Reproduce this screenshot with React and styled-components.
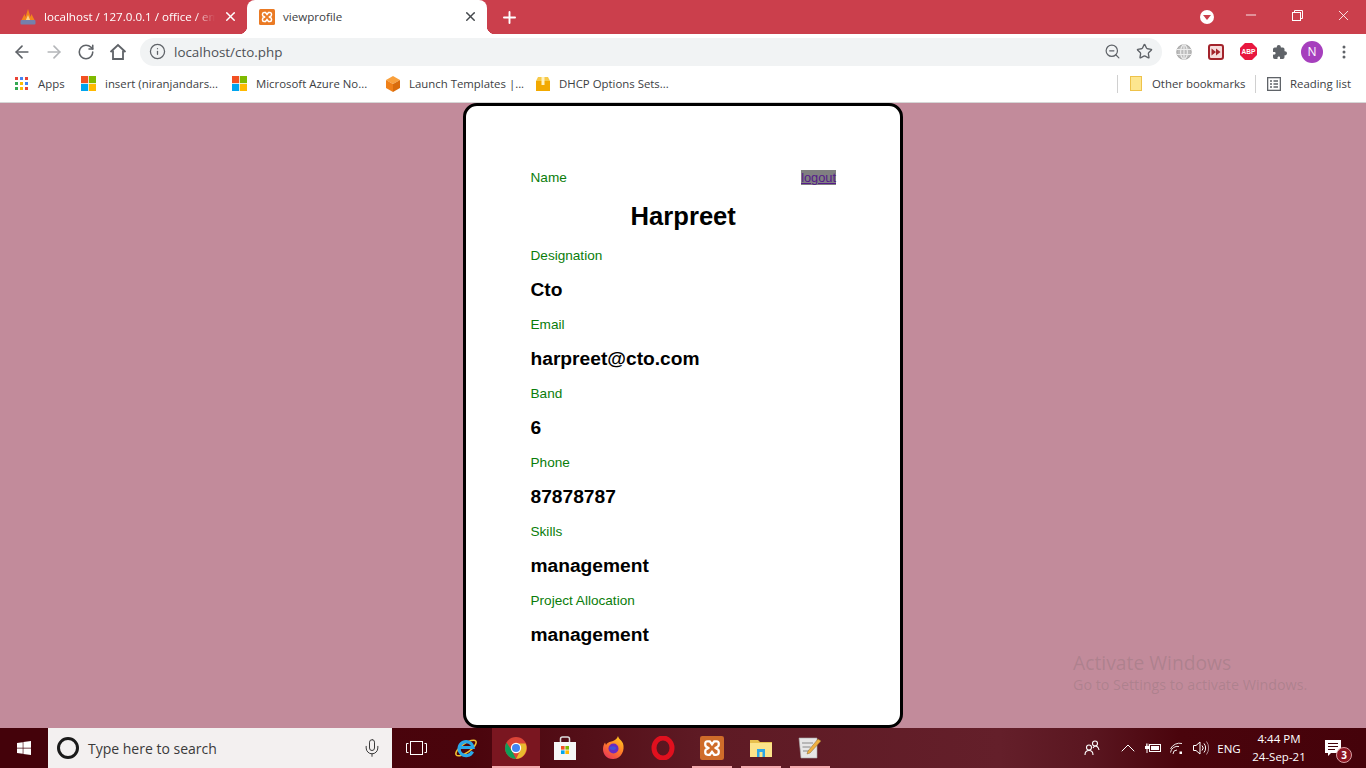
import React from "react";
import styled, { createGlobalStyle } from "styled-components";
import { ArrowLeft, ArrowRight, RotateCw, Info, ZoomOut, Star, X, Plus, Mic, Minus, ChevronUp } from "lucide-react";
import { IoExtensionPuzzle } from "react-icons/io5";
import { FaWindows } from "react-icons/fa";

const uiFont = `"Open Sans", "Noto Sans", sans-serif`;

const profile = [
  { label: "Designation", value: "Cto" },
  { label: "Email", value: "harpreet@cto.com" },
  { label: "Band", value: "6" },
  { label: "Phone", value: "87878787" },
  { label: "Skills", value: "management" },
  { label: "Project Allocation", value: "management" },
];

const GlobalStyle = createGlobalStyle`
  html, body {
    margin: 0;
    height: 768px;
    overflow: hidden;
    font-family: "Liberation Sans", Arial, sans-serif;
  }
  * { box-sizing: border-box; }
`;

const Screen = styled.div`
  width: 1366px;
  height: 768px;
  display: flex;
  flex-direction: column;
  position: relative;
  overflow: hidden;
`;

/* ---------- browser chrome ---------- */

const TabStrip = styled.div`
  height: 34px;
  flex: none;
  background: #cb3f4c;
  display: flex;
  align-items: stretch;
  padding-left: 8px;
  font-family: ${uiFont};
  font-size: 11.6px;
`;

const Tab = styled.div`
  width: ${(p) => (p.$active ? "240px" : "239px")};
  position: relative;
  display: flex;
  align-items: center;
  gap: 8px;
  padding: 0 9px 1px 12px;
  color: ${(p) => (p.$active ? "#3c4043" : "#fff")};
  background: ${(p) => (p.$active ? "#fff" : "transparent")};
  border-radius: 8px 8px 0 0;
  &::before, &::after {
    content: "";
    display: ${(p) => (p.$active ? "block" : "none")};
    position: absolute;
    bottom: 0;
    width: 8px;
    height: 8px;
  }
  &::before {
    left: -8px;
    background: radial-gradient(circle at 0 0, #cb3f4c 8px, #fff 8.5px);
  }
  &::after {
    right: -8px;
    background: radial-gradient(circle at 100% 0, #cb3f4c 8px, #fff 8.5px);
  }
`;

const TabTitle = styled.span`
  flex: 1;
  min-width: 0;
  white-space: nowrap;
  ${(p) => p.$fade && "-webkit-mask-image: linear-gradient(90deg, #000 88%, transparent);"}
`;

const NewTab = styled.div`
  width: 28px;
  margin-left: 8px;
  display: flex;
  align-items: center;
  justify-content: center;
  color: #fff;
`;

const WindowArea = styled.div`
  margin-left: auto;
  display: flex;
  align-items: stretch;
`;

const ProfileDrop = styled.div`
  width: 14px;
  height: 14px;
  margin: 10px 14px 0 0;
  border-radius: 50%;
  background: #fff;
  display: flex;
  align-items: center;
  justify-content: center;
  &::after {
    content: "";
    border: 4px solid transparent;
    border-top: 5px solid #cb3f4c;
    border-bottom: 0;
  }
`;

const WindowButton = styled.div`
  width: 46px;
  height: 30px;
  display: flex;
  align-items: center;
  justify-content: center;
  color: #fff;
`;

const Toolbar = styled.div`
  height: 35px;
  flex: none;
  background: #fff;
  display: flex;
  align-items: center;
  padding: 0 6px;
`;

const ToolSlot = styled.div`
  width: 32px;
  height: 32px;
  flex: none;
  display: flex;
  align-items: center;
  justify-content: center;
  color: ${(p) => p.$color || "#5f6368"};
`;

const Omnibox = styled.div`
  flex: 1;
  height: 28px;
  margin: 0 6px;
  border-radius: 14px;
  background: #f1f3f4;
  display: flex;
  align-items: center;
  padding: 0 2px 0 9px;
  color: #5f6368;
  font-family: ${uiFont};
  font-size: 13.4px;
`;

const Url = styled.span`
  flex: 1;
  margin-left: 8px;
  color: #4d5156;
`;

const Avatar = styled.div`
  width: 22px;
  height: 22px;
  border-radius: 50%;
  background: #a63fbd;
  color: #fff;
  font-family: ${uiFont};
  font-size: 12px;
  display: flex;
  align-items: center;
  justify-content: center;
`;

const Bookmarks = styled.div`
  height: 34px;
  flex: none;
  background: #fff;
  border-bottom: 1px solid #d6d6d6;
  display: flex;
  align-items: center;
  padding: 0 15px 4px;
  font-family: ${uiFont};
  font-size: 11.4px;
  color: #3c4043;
`;

const Bookmark = styled.div`
  width: ${(p) => p.$w}px;
  flex: none;
  display: flex;
  align-items: center;
  gap: ${(p) => p.$gap || 9}px;
  white-space: nowrap;
`;

const BarDivider = styled.div`
  width: 1px;
  height: 18px;
  flex: none;
  background: #d0d0d0;
  margin: ${(p) => p.$margin};
`;

/* ---------- page ---------- */

const Page = styled.main`
  flex: 1;
  min-height: 0;
  background: #c28b9b;
  display: flex;
  justify-content: center;
  align-items: flex-start;
`;

const Card = styled.section`
  width: 440px;
  height: 625px;
  background: #fff;
  border: 3px solid #000;
  border-radius: 14px;
  padding: 54px 64px 0 64.5px;
`;

const NameRow = styled.div`
  height: 34px;
  display: flex;
  align-items: center;
  justify-content: space-between;
`;

const Label = styled.div`
  height: 34px;
  line-height: 35px;
  font-size: 13.6px;
  color: #0a7d0a;
`;

const Logout = styled.a`
  background: #808080;
  color: #551a8b;
  font-size: 12.8px;
  line-height: 15px;
  text-decoration: underline;
`;

const Name = styled.h1`
  margin: 0;
  height: 44px;
  line-height: 44px;
  font-size: 25.6px;
  font-weight: bold;
  color: #000;
  text-align: center;
`;

const Value = styled.div`
  height: 35px;
  line-height: 35px;
  font-size: 19.2px;
  font-weight: bold;
  color: #000;
`;

const Watermark = styled.div`
  position: absolute;
  left: 1073px;
  top: 651px;
  color: rgba(90, 90, 90, 0.2);
  font-family: ${uiFont};
`;

const WatermarkTitle = styled.div`
  font-size: 19.3px;
  line-height: 24px;
`;

const WatermarkText = styled.div`
  font-size: 14.3px;
  line-height: 20px;
  white-space: nowrap;
`;

/* ---------- taskbar ---------- */

const Taskbar = styled.footer`
  height: 40px;
  flex: none;
  display: flex;
  align-items: stretch;
  color: #fff;
  background: linear-gradient(90deg, #44020a 0, #4a040c 470px, #5e1a24 700px, #641f2a 1000px, #5a1620 1090px, #4a040c 1180px, #45020a 100%);
  font-family: ${uiFont};
`;

const StartButton = styled.div`
  width: 48px;
  display: flex;
  align-items: center;
  justify-content: center;
  background: #44020a;
`;

const SearchBox = styled.div`
  width: 344px;
  background: #f3f0f0;
  color: #3a3a3a;
  display: flex;
  align-items: center;
  padding: 0 10px 0 9px;
  font-size: 14px;
`;

const Cortana = styled.div`
  width: 22px;
  height: 22px;
  border-radius: 50%;
  border: 3px solid #1a1a1a;
  margin-right: 9px;
`;

const SearchText = styled.span`
  flex: 1;
`;

const TaskSlot = styled.div`
  width: ${(p) => p.$w || 49}px;
  flex: none;
  position: relative;
  display: flex;
  align-items: center;
  justify-content: center;
  background: ${(p) => (p.$focused ? "#7a1620" : "transparent")};
  &::after {
    content: "";
    display: ${(p) => (p.$open ? "block" : "none")};
    position: absolute;
    bottom: 0;
    height: 2px;
    left: ${(p) => (p.$focused ? "0" : "5px")};
    right: ${(p) => (p.$focused ? "0" : "4px")};
    background: #f3a9ad;
  }
`;

const Tray = styled.div`
  margin-left: auto;
  display: flex;
  align-items: stretch;
  padding-right: 12px;
  font-size: 11.5px;
`;

const TraySlot = styled.div`
  width: ${(p) => p.$w}px;
  margin-left: ${(p) => p.$ml || 0}px;
  flex: none;
  position: relative;
  display: flex;
  align-items: center;
  justify-content: center;
`;

const Clock = styled.div`
  text-align: center;
  line-height: 18px;
  white-space: nowrap;
`;

const Badge = styled.div`
  position: absolute;
  left: 24px;
  top: 19px;
  width: 16px;
  height: 16px;
  border-radius: 50%;
  background: #8c1420;
  border: 1px solid #d8a0a5;
  font-size: 10px;
  font-weight: 700;
  line-height: 14px;
  text-align: center;
`;

/* ---------- drawn icons ---------- */

const PmaIcon = () => (
  <svg width="16" height="16" viewBox="0 0 16 16">
    <path d="M1 12 4.500 5 5.500 8 8 0l2.500 8 1-3L15 12z" fill="#f2861c" />
    <path d="M5.500 12 8 6l2.500 6z" fill="#fbd28a" />
    <rect x="0.500" y="11" width="15" height="4.500" rx="1" fill="#7480ac" />
  </svg>
);

const XamppIcon = ({ size = 16, fill = "#ea7a24" }) => (
  <svg width={size} height={size} viewBox="0 0 16 16">
    <rect width="16" height="16" rx="1.500" fill={fill} />
    <path
      d="M5 3.500h1.500L8 5.500l1.500-2H11a1.600 1.600 0 0 1 1.500 1.600v.6A1.800 1.800 0 0 1 11 7.500l-.6.5.6.5a1.800 1.800 0 0 1 1.500 1.800v.6A1.600 1.600 0 0 1 11 12.500H9.500L8 10.500l-1.500 2H5a1.600 1.600 0 0 1-1.500-1.600v-.6A1.800 1.800 0 0 1 5 8.500l.6-.5L5 7.500a1.800 1.800 0 0 1-1.500-1.800v-.6A1.600 1.600 0 0 1 5 3.500z"
      fill="none"
      stroke="#fff"
      strokeWidth="1.500"
    />
  </svg>
);

const HomeIcon = () => (
  <svg width="18" height="18" viewBox="0 0 18 18" fill="none" stroke="#5f6368" strokeWidth="1.800">
    <path d="M1.500 9 9 2l7.500 7" />
    <path d="M4 7.500V16h10V7.500" />
  </svg>
);

const AppsIcon = () => (
  <svg width="13" height="13" viewBox="0 0 13 13">
    {["#ea4335", "#4285f4", "#ea4335", "#34a853", "#fbbc05", "#4285f4", "#34a853", "#fbbc05", "#ea4335"].map((c, i) => (
      <rect key={i} x={(i % 3) * 5} y={Math.floor(i / 3) * 5} width="3" height="3" fill={c} />
    ))}
  </svg>
);

const MsIcon = ({ size = 15 }) => (
  <svg width={size} height={size} viewBox="0 0 16 16">
    <rect width="7.600" height="7.600" fill="#f25022" />
    <rect x="8.400" width="7.600" height="7.600" fill="#7fba00" />
    <rect y="8.400" width="7.600" height="7.600" fill="#00a4ef" />
    <rect x="8.400" y="8.400" width="7.600" height="7.600" fill="#ffb900" />
  </svg>
);

const CubeIcon = () => (
  <svg width="16" height="16" viewBox="0 0 16 16">
    <path d="M8 0 15 4 8 8 1 4z" fill="#f9a03c" />
    <path d="M1 4l7 4v8l-7-4z" fill="#f08018" />
    <path d="M15 4 8 8v8l7-4z" fill="#d96c0c" />
  </svg>
);

const BoxIcon = () => (
  <svg width="16" height="16" viewBox="0 0 16 16">
    <path d="M3 1h10l2 4H1z" fill="#f7c948" />
    <rect x="1" y="5" width="14" height="10" fill="#f2a900" />
    <rect x="6.500" y="1" width="3" height="8" fill="#fff2c0" />
  </svg>
);

const FolderIcon = () => (
  <svg width="12" height="15" viewBox="0 0 12 15">
    <rect x="0.500" y="0.500" width="11" height="14" fill="#fde68f" stroke="#eec24a" />
  </svg>
);

const ReadingIcon = () => (
  <svg width="14" height="14" viewBox="0 0 14 14" fill="none" stroke="#5f6368" strokeWidth="1.300">
    <rect x="0.650" y="0.650" width="12.700" height="12.700" />
    <path d="M3 4h2M6.500 4H11M3 7h2M6.500 7H11M3 10h2M6.500 10H11" />
  </svg>
);

const GlobeIcon = () => (
  <svg width="16" height="16" viewBox="0 0 16 16" fill="none" stroke="#a8a8a8" strokeWidth="1.100">
    <circle cx="8" cy="8" r="7.200" fill="#bdbdbd" />
    <ellipse cx="8" cy="8" rx="3.400" ry="7.200" stroke="#eee" />
    <path d="M1 5.500h14M1 10.500h14M8 1v14" stroke="#eee" />
  </svg>
);

const ForwardBadge = () => (
  <svg width="16" height="16" viewBox="0 0 16 16">
    <rect x="1" y="1" width="14" height="14" rx="2" fill="#f6dcdc" stroke="#a3232b" strokeWidth="2" />
    <path d="M3.500 4.500 8 8l-4.500 3.500zM8 4.500 12.500 8 8 11.500z" fill="#a3232b" />
  </svg>
);

const AbpIcon = () => (
  <svg width="17" height="17" viewBox="0 0 17 17">
    <path d="M5 0h7l5 5v7l-5 5H5l-5-5V5z" fill="#e8173f" />
    <text x="8.500" y="11" textAnchor="middle" fontSize="6.600" fontWeight="700" fill="#fff" fontFamily="Liberation Sans">ABP</text>
  </svg>
);

const DotsIcon = () => (
  <svg width="4" height="14" viewBox="0 0 4 14" fill="#5f6368">
    <circle cx="2" cy="2" r="1.500" />
    <circle cx="2" cy="7" r="1.500" />
    <circle cx="2" cy="12" r="1.500" />
  </svg>
);

const RestoreIcon = () => (
  <svg width="11" height="11" viewBox="0 0 11 11" fill="none" stroke="#fff">
    <rect x="0.500" y="2.500" width="8" height="8" />
    <path d="M2.500 2.500v-2h8v8h-2" />
  </svg>
);

const TaskViewIcon = () => (
  <svg width="21" height="14" viewBox="0 0 21 14" fill="none" stroke="#fff" strokeWidth="1">
    <rect x="4.500" y="0.500" width="12" height="13" />
    <path d="M2.500 2.500H.5v9h2M18.500 2.500h2v9h-2" />
  </svg>
);

const IeIcon = () => (
  <svg width="24" height="24" viewBox="0 0 24 24" fill="none">
    <ellipse cx="12" cy="12" rx="12" ry="4.500" transform="rotate(-35 12 12)" stroke="#f2c230" strokeWidth="1.500" />
    <path d="M18.500 15.500A7 7 0 1 1 19 11.500H6.500" stroke="#2aa8e8" strokeWidth="3.200" />
  </svg>
);

const ChromeIcon = () => (
  <svg width="22" height="22" viewBox="0 0 22 22">
    <circle cx="11" cy="11" r="11" fill="#db4437" />
    <path d="M11 22A11 11 0 0 1 1.500 5.500L7 14l4 8z" fill="#0f9d58" />
    <path d="M11 22l5-10-5-5.500h9.500A11 11 0 0 1 11 22z" fill="#e8b92e" />
    <circle cx="11" cy="11" r="5.200" fill="#fff" />
    <circle cx="11" cy="11" r="4" fill="#4285f4" />
  </svg>
);

const StoreIcon = () => (
  <svg width="24" height="24" viewBox="0 0 24 24">
    <path d="M7.500 6V3a2 2 0 0 1 2-2h5a2 2 0 0 1 2 2v3" fill="none" stroke="#ddd" strokeWidth="1.500" />
    <rect x="1" y="6" width="22" height="18" fill="#f6f6f6" />
    <rect x="8" y="10" width="3.600" height="3.600" fill="#f25022" />
    <rect x="12.400" y="10" width="3.600" height="3.600" fill="#7fba00" />
    <rect x="8" y="14.400" width="3.600" height="3.600" fill="#00a4ef" />
    <rect x="12.400" y="14.400" width="3.600" height="3.600" fill="#ffb900" />
  </svg>
);

const FirefoxIcon = () => (
  <svg width="24" height="24" viewBox="0 0 24 24">
    <defs>
      <linearGradient id="fx" x1="0.800" y1="0" x2="0.200" y2="1">
        <stop offset="0" stopColor="#ffc81e" />
        <stop offset="0.500" stopColor="#ff7a2a" />
        <stop offset="1" stopColor="#e8345a" />
      </linearGradient>
    </defs>
    <path d="M16 0c.5 3 4 4.500 5 7.500 2 6-1 15-9.500 15.500C5 23.500 1 18.500 1 13c0-3 1-5 2-6.500l1 2.500C6 5.500 9 6 11 5c2-1 4-2 5-5z" fill="url(#fx)" />
    <circle cx="11.500" cy="12.500" r="5" fill="#6a2bbf" />
    <path d="M8 11c2-1.500 5-1 6.500 1-1 2-4 3-6.500 1z" fill="#3f52d8" />
  </svg>
);

const OperaIcon = () => (
  <svg width="24" height="24" viewBox="0 0 24 24">
    <ellipse cx="12" cy="12" rx="9" ry="10" fill="none" stroke="#e0101e" strokeWidth="5" />
  </svg>
);

const ExplorerIcon = () => (
  <svg width="22" height="20" viewBox="0 0 22 20">
    <path d="M0 2h8l2 2h12v3H0z" fill="#e8c04e" />
    <rect y="5" width="22" height="14" fill="#fce38a" />
    <rect x="7" y="11" width="8" height="8" fill="#2ea6e6" />
    <rect x="9.500" y="14" width="3" height="5" fill="#fce38a" />
  </svg>
);

const NotepadIcon = () => (
  <svg width="24" height="24" viewBox="0 0 24 24">
    <path d="M1 2h18v20H3z" fill="#e6e6e6" stroke="#aaa" strokeWidth="0.600" />
    <path d="M4 7h11M4.500 11h8M5 15h6" stroke="#888" />
    <path d="M10 15 20 3l3 2-11 12-3 1z" fill="#f0b040" stroke="#8a6a30" strokeWidth="0.500" />
  </svg>
);

const PeopleIcon = () => (
  <svg width="16" height="16" viewBox="0 0 16 16" fill="none" stroke="#fff" strokeWidth="1.100">
    <circle cx="11" cy="3.500" r="2.500" />
    <circle cx="5" cy="7.500" r="2.500" />
    <path d="M1 15c0-3 2-4.500 4-4.500S9 12 9 15M9 8c1-1.500 1.500-2 2-2 2 0 3.500 1.500 4 4" />
  </svg>
);

const BatteryIcon = () => (
  <svg width="17" height="12" viewBox="0 0 17 12" fill="#fff">
    <rect x="5.500" y="2.500" width="11" height="7" fill="none" stroke="#fff" />
    <rect x="7" y="4" width="8" height="4" />
    <path d="M1 4h4v3H1zM2 1.500h.8V4H2zM3.500 1.500h.8V4h-.8zM2.500 7h1v4h-1z" />
  </svg>
);

const WifiIcon = () => (
  <svg width="14" height="14" viewBox="0 0 14 14" fill="none" stroke="#fff" strokeWidth="0.900">
    <path d="M.5 8A10 10 0 0 1 12 2.500M.5 11.500A7 7 0 0 1 9 5.500M3 13a4 4 0 0 1 4-4" />
    <rect x="9.500" y="10.500" width="2.500" height="2.500" fill="#fff" stroke="none" />
  </svg>
);

const VolumeIcon = () => (
  <svg width="16" height="14" viewBox="0 0 16 14" fill="none" stroke="#fff" strokeWidth="1">
    <path d="M.5 4.500h2.500L7 1v12L3 9.500H.5z" />
    <path d="M9 4.500a3.500 3.500 0 0 1 0 5M11 2.500a7 7 0 0 1 0 9" />
    <path d="M13.500 .5a11 11 0 0 1 0 13" stroke="#b09098" />
  </svg>
);

const ChatIcon = () => (
  <svg width="16" height="17" viewBox="0 0 16 17" fill="#fff">
    <path d="M0 0h16v13H6l-3 3v-3H0z" />
    <path d="M3 3.500h10M3 6.500h10M3 9.500h7" stroke="#44020a" />
  </svg>
);

const App = () => {
  return (
    <Screen>
      <GlobalStyle />

      <TabStrip>
        <Tab>
          <PmaIcon />
          <TabTitle $fade>localhost / 127.0.0.1 / office / em</TabTitle>
          <X size={15} strokeWidth={2.4} />
        </Tab>
        <Tab $active>
          <XamppIcon />
          <TabTitle>viewprofile</TabTitle>
          <X size={15} strokeWidth={2.4} color="#45494d" />
        </Tab>
        <NewTab>
          <Plus size={19} strokeWidth={2.4} />
        </NewTab>
        <WindowArea>
          <ProfileDrop />
          <WindowButton>
            <Minus size={16} strokeWidth={1.3} />
          </WindowButton>
          <WindowButton>
            <RestoreIcon />
          </WindowButton>
          <WindowButton>
            <X size={17} strokeWidth={1.2} />
          </WindowButton>
        </WindowArea>
      </TabStrip>

      <Toolbar>
        <ToolSlot><ArrowLeft size={20} strokeWidth={2} /></ToolSlot>
        <ToolSlot $color="#b4b6b9"><ArrowRight size={20} strokeWidth={2} /></ToolSlot>
        <ToolSlot><RotateCw size={18} strokeWidth={2.1} /></ToolSlot>
        <ToolSlot><HomeIcon /></ToolSlot>
        <Omnibox>
          <Info size={17} strokeWidth={1.8} />
          <Url>localhost/cto.php</Url>
          <ToolSlot><ZoomOut size={17} strokeWidth={1.7} /></ToolSlot>
          <ToolSlot><Star size={17} strokeWidth={1.9} /></ToolSlot>
        </Omnibox>
        <ToolSlot><GlobeIcon /></ToolSlot>
        <ToolSlot><ForwardBadge /></ToolSlot>
        <ToolSlot><AbpIcon /></ToolSlot>
        <ToolSlot><IoExtensionPuzzle size={16} /></ToolSlot>
        <ToolSlot><Avatar>N</Avatar></ToolSlot>
        <ToolSlot><DotsIcon /></ToolSlot>
      </Toolbar>

      <Bookmarks>
        <Bookmark $w={66} $gap={10}><AppsIcon />Apps</Bookmark>
        <Bookmark $w={151}><MsIcon />insert (niranjandars...</Bookmark>
        <Bookmark $w={153}><MsIcon />Microsoft Azure No...</Bookmark>
        <Bookmark $w={150} $gap={8}><CubeIcon />Launch Templates |...</Bookmark>
        <Bookmark $w={150} $gap={8}><BoxIcon />DHCP Options Sets...</Bookmark>
        <BarDivider $margin="0 12px 0 432px" />
        <Bookmark $w={125} $gap={10}><FolderIcon />Other bookmarks</Bookmark>
        <BarDivider $margin="0 11px 0 0" />
        <Bookmark $w={84} $gap={9}><ReadingIcon />Reading list</Bookmark>
      </Bookmarks>

      <Page>
        <Card>
          <NameRow>
            <Label>Name</Label>
            <Logout href="#">logout</Logout>
          </NameRow>
          <Name>Harpreet</Name>
          {profile.map((row) => (
            <React.Fragment key={row.label}>
              <Label>{row.label}</Label>
              <Value>{row.value}</Value>
            </React.Fragment>
          ))}
        </Card>
      </Page>

      <Watermark>
        <WatermarkTitle>Activate Windows</WatermarkTitle>
        <WatermarkText>Go to Settings to activate Windows.</WatermarkText>
      </Watermark>

      <Taskbar>
        <StartButton><FaWindows size={16} /></StartButton>
        <SearchBox>
          <Cortana />
          <SearchText>Type here to search</SearchText>
          <Mic size={20} strokeWidth={1.2} />
        </SearchBox>
        <TaskSlot $w={48}><TaskViewIcon /></TaskSlot>
        <TaskSlot $w={52}><IeIcon /></TaskSlot>
        <TaskSlot $w={48} $focused $open><ChromeIcon /></TaskSlot>
        <TaskSlot><StoreIcon /></TaskSlot>
        <TaskSlot><FirefoxIcon /></TaskSlot>
        <TaskSlot><OperaIcon /></TaskSlot>
        <TaskSlot $open><XamppIcon size={24} fill="#cf6c2a" /></TaskSlot>
        <TaskSlot $open><ExplorerIcon /></TaskSlot>
        <TaskSlot $open><NotepadIcon /></TaskSlot>
        <Tray>
          <TraySlot $w={32}><PeopleIcon /></TraySlot>
          <TraySlot $w={24} $ml={8}><ChevronUp size={24} strokeWidth={1} /></TraySlot>
          <TraySlot $w={24}><BatteryIcon /></TraySlot>
          <TraySlot $w={25}><WifiIcon /></TraySlot>
          <TraySlot $w={23}><VolumeIcon /></TraySlot>
          <TraySlot $w={34}>ENG</TraySlot>
          <TraySlot $w={66}>
            <Clock>4:44 PM<br />24-Sep-21</Clock>
          </TraySlot>
          <TraySlot $w={42}>
            <ChatIcon />
            <Badge>3</Badge>
          </TraySlot>
        </Tray>
      </Taskbar>
    </Screen>
  );
};

export default App;
